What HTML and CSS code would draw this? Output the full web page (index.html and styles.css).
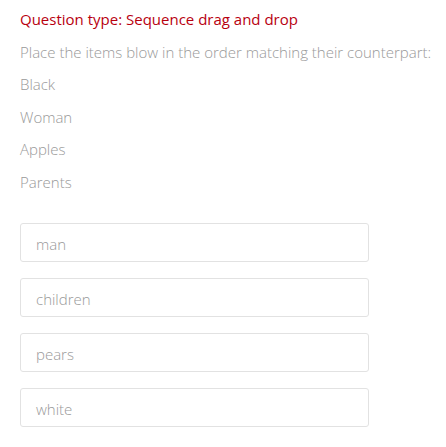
FILE: index.html
```
<!DOCTYPE html>
<html>
<head>
  <title>Sequence drag and drop</title>
  <meta name="viewport" content="width=device-width, initial-scale=1.0">
  <link rel="stylesheet" href="styles.css">
</head>
<body>
  <div class="question">
    <h2 class="question-type">Question type: Sequence drag and drop</h2>
    <p class="prompt">Place the items blow in the order matching their counterpart:</p>

    <ul class="counterparts">
      <li>Black</li>
      <li>Woman</li>
      <li>Apples</li>
      <li>Parents</li>
    </ul>

    <ul class="sequence" id="sequence">
      <li class="drag-item" draggable="true">man</li>
      <li class="drag-item" draggable="true">children</li>
      <li class="drag-item" draggable="true">pears</li>
      <li class="drag-item" draggable="true">white</li>
    </ul>
  </div>
</body>
</html>
```

FILE: styles.css
```
body {
  font-family: "Open Sans", "Liberation Sans", sans-serif;
  background-color: #fff;
  color: #999;
  margin: 0;
  padding: 3px 8px 0 20px;
}

.question-type {
  font-size: 15px;
  font-weight: 400;
  color: #b8000f;
  line-height: 32.5px;
  margin: 0;
}

.prompt {
  font-size: 15px;
  font-weight: 300;
  line-height: 32.5px;
  margin: 0;
  white-space: nowrap;
}

.counterparts {
  list-style: none;
  margin: 0;
  padding: 0;
  font-size: 15px;
  font-weight: 300;
  line-height: 32.5px;
}

.sequence {
  list-style: none;
  margin: 25px 0 0;
  padding: 0;
  width: 349px;
}

.drag-item {
  box-sizing: border-box;
  height: 39px;
  margin-bottom: 16px;
  padding: 3px 15px 0;
  line-height: 35px;
  font-size: 15px;
  font-weight: 300;
  border: 1px solid #e2e2e2;
  border-radius: 3px;
  cursor: move;
}
```
